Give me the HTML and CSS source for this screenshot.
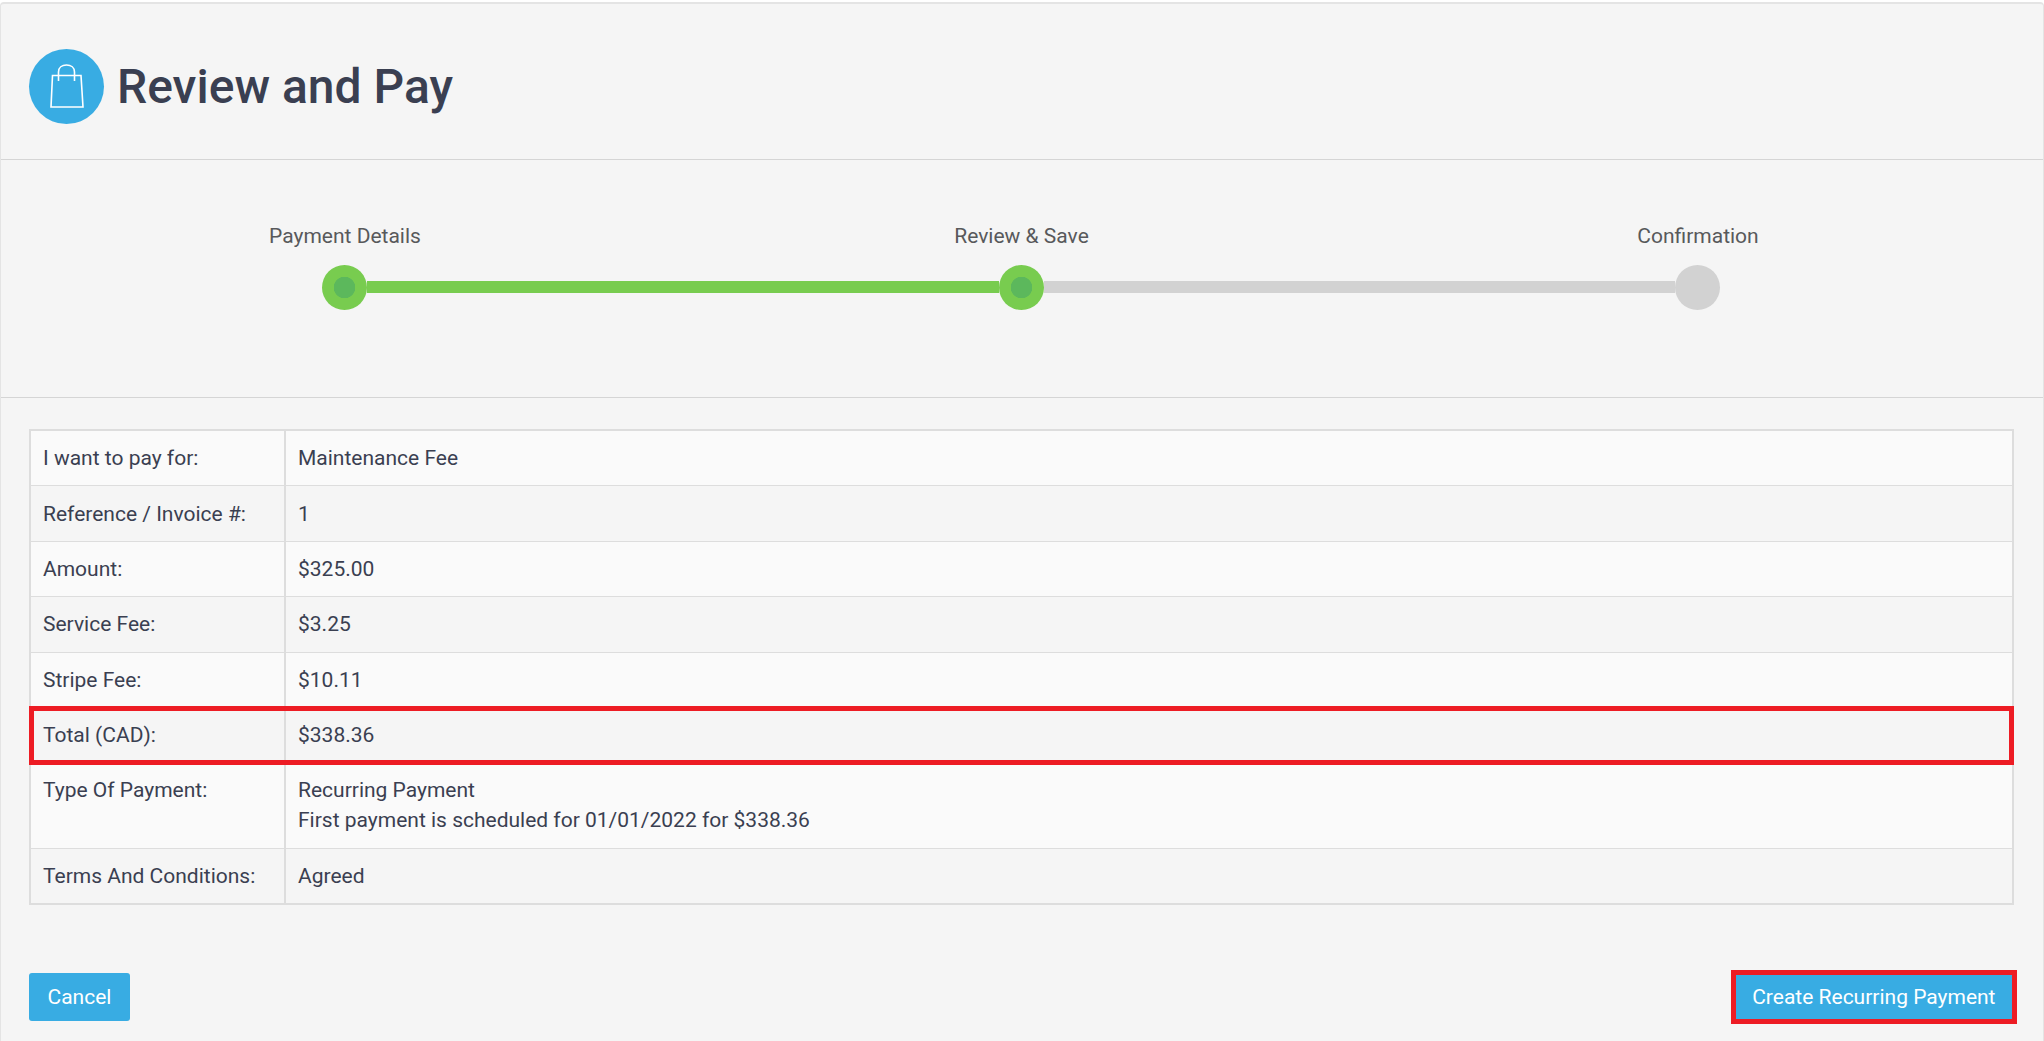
FILE: index.html
```html
<!DOCTYPE html>
<html lang="en">
<head>
    <meta charset="UTF-8">
    <title>Review and Pay</title>
    <link rel="stylesheet" href="styles.css">
</head>
<body>

<div class="panel">

    <!-- Title -->
    <header class="panel-header">
        <span class="title-icon">
            <svg width="34" height="44" viewBox="0 0 34 44" fill="none" stroke="#fff" stroke-width="1.6">
                <path d="M2.5 11.5H31L33 43H1Z"/>
                <path d="M8.5 17V8C8.5 3.5 12 1 16.5 1S24.5 3.5 24.5 8V17"/>
            </svg>
        </span>
        <h1>Review and Pay</h1>
    </header>

    <!-- Steps -->
    <section class="wizard">
        <div class="step-labels">
            <span>Payment Details</span>
            <span>Review &amp; Save</span>
            <span>Confirmation</span>
        </div>
        <div class="track">
            <span class="dot done"></span>
            <span class="bar done"></span>
            <span class="dot done"></span>
            <span class="bar"></span>
            <span class="dot"></span>
        </div>
    </section>

    <!-- Summary -->
    <section class="summary">
        <table>
            <tr><td>I want to pay for:</td><td>Maintenance Fee</td></tr>
            <tr><td>Reference / Invoice #:</td><td>1</td></tr>
            <tr><td>Amount:</td><td>$325.00</td></tr>
            <tr><td>Service Fee:</td><td>$3.25</td></tr>
            <tr><td>Stripe Fee:</td><td>$10.11</td></tr>
            <tr><td class="marked">Total (CAD):</td><td>$338.36</td></tr>
            <tr><td>Type Of Payment:</td><td>Recurring Payment<br>First payment is scheduled for 01/01/2022 for $338.36</td></tr>
            <tr><td>Terms And Conditions:</td><td>Agreed</td></tr>
        </table>

        <div class="actions">
            <button class="btn">Cancel</button>
            <button class="btn btn-marked">Create Recurring Payment</button>
        </div>
    </section>

</div>

</body>
</html>
```

FILE: styles.css
```css
/* Base */
html, body {
    height: 100%;
}

body {
    margin: 0;
    padding-top: 2px;
    box-sizing: border-box;
    background-color: #fff;
    font-family: Roboto, Arial, sans-serif;
    font-size: 21px;
    color: #3a3f51;
    overflow: hidden;
}

.panel {
    height: 100%;
    background-color: #f5f5f5;
    border: 1px solid #e4e4e4;
    border-top-width: 2px;
    border-bottom: none;
    border-radius: 4px 4px 0 0;
    box-sizing: border-box;
}

/* Title */
.panel-header {
    display: flex;
    align-items: center;
    gap: 13px;
    height: 146px;
    padding: 9px 28px 0;
    border-bottom: 1px solid #d5d5d5;
}

.panel-header h1 {
    margin: 0;
    font-size: 48px;
    font-weight: 500;
    color: #3a3f51;
}

.title-icon {
    display: flex;
    align-items: center;
    justify-content: center;
    width: 75px;
    height: 75px;
    border-radius: 50%;
    background-color: #38ace3;
}

/* Steps */
.wizard {
    height: 238px;
    padding: 61px 2px 0 0;
    border-bottom: 1px solid #d5d5d5;
    box-sizing: border-box;
}

.step-labels {
    display: grid;
    grid-template-columns: repeat(3, 676.5px);
    justify-content: center;
    padding-left: 1px;
    text-align: center;
    line-height: 30px;
    color: #58595b;
}

.track {
    display: flex;
    align-items: center;
    width: 1398px;
    margin: 14px auto 0;
}

.dot {
    flex: none;
    width: 45px;
    height: 45px;
    border-radius: 50%;
    background-color: #d2d2d2;
}

.dot.done {
    background-color: #78cc4f;
    background-image: radial-gradient(circle, #5cb85c 10.5px, transparent 11px);
}

.bar {
    flex: 1;
    height: 12px;
    margin-bottom: 2px;
    background-color: #d2d2d2;
}

.bar.done {
    background-color: #78cc4f;
}

/* Summary table */
.summary {
    padding: 31px 29px 0 28px;
}

table {
    width: 100%;
    border-collapse: collapse;
    border: 2px solid #ddd;
}

td {
    padding: 12.2px 12px;
    line-height: 30px;
    border: 1px solid #ddd;
    vertical-align: top;
}

td:first-child {
    width: 228.5px;
    border-right-width: 2px;
}

td:last-child {
    padding-left: 12.5px;
}

tr:nth-child(odd) {
    background-color: #fafafa;
}

tr:nth-child(even) {
    background-color: #f5f5f5;
}

/* red marker drawn over the total row */
td.marked {
    position: relative;
}

td.marked::after {
    content: "";
    position: absolute;
    top: -2px;
    left: -2px;
    width: 1985px;
    height: 59px;
    box-sizing: border-box;
    border: 5px solid #ed1c24;
    pointer-events: none;
}

/* Buttons */
.actions {
    display: flex;
    justify-content: space-between;
    margin-top: 68px;
}

.btn {
    height: 48px;
    padding: 0 18.5px;
    border: none;
    border-radius: 3px;
    background-color: #38ace3;
    font-family: inherit;
    font-size: 21px;
    color: #fff;
    cursor: pointer;
}

.btn-marked {
    border-radius: 0;
    outline: 5px solid #ed1c24;
    outline-offset: -2px;
}
```
